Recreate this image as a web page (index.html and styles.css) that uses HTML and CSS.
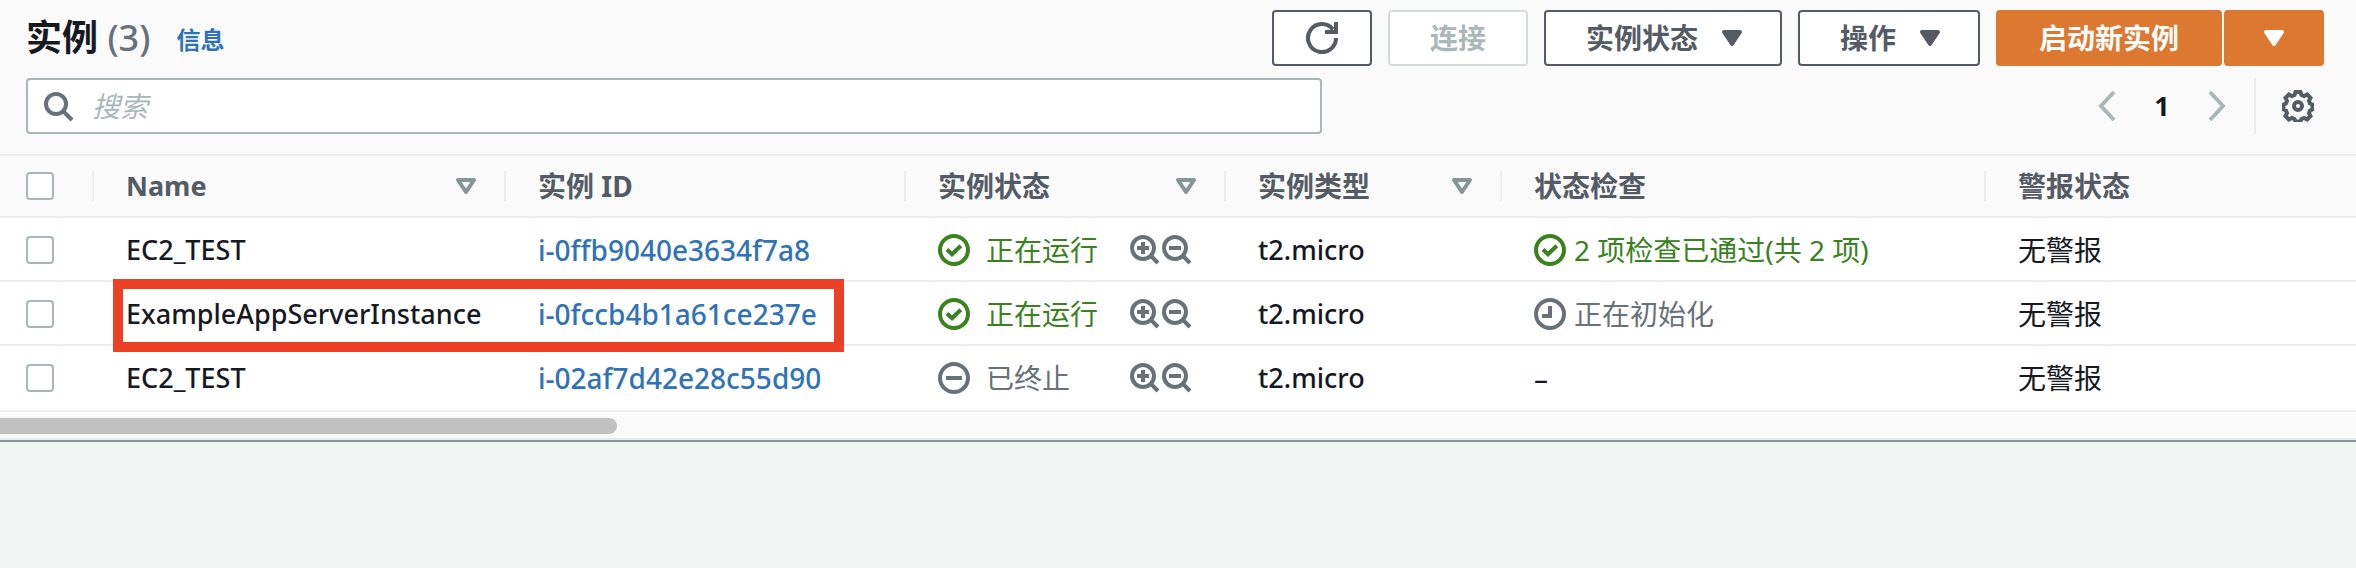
FILE: index.html
```html
<!DOCTYPE html>
<html lang="zh-CN">
<head>
<meta charset="utf-8">
<title>实例</title>
<link rel="stylesheet" href="styles.css">
</head>
<body>
<svg class="defs" aria-hidden="true">
  <symbol id="check" viewBox="0 0 32 32"><circle cx="16" cy="16" r="14"/><path d="M9 15.5l5 4.8 8.8-8.6"/></symbol>
  <symbol id="stopped" viewBox="0 0 32 32"><circle cx="16" cy="16" r="14"/><path d="M8 16h16"/></symbol>
  <symbol id="pending" viewBox="0 0 32 32"><circle cx="16" cy="16" r="14"/><path d="M16 8v10H8"/></symbol>
  <symbol id="zoom-in" viewBox="0 0 32 32"><circle cx="15" cy="14" r="11"/><path d="M22 21l8 8M9 14h12M15 8v12"/></symbol>
  <symbol id="zoom-out" viewBox="0 0 32 32"><circle cx="15" cy="14" r="11"/><path d="M22 21l8 8M9 14h12"/></symbol>
  <symbol id="search" viewBox="0 0 32 32"><circle cx="14" cy="14" r="10"/><path d="M21 21l9 9"/></symbol>
  <symbol id="caret" viewBox="0 0 32 32"><path d="M8 10h16l-8 12z"/></symbol>
  <symbol id="refresh" viewBox="0 0 32 32"><path d="M30 16a14 14 0 1 1-3-8.6M30 0v10H19"/><path class="solid" d="M24 5l5 5h-5z"/></symbol>
  <symbol id="prev" viewBox="0 0 32 32"><path d="M24 2L11 16l13 14"/></symbol>
  <symbol id="next" viewBox="0 0 32 32"><path d="M8 2l13 14L8 30"/></symbol>
  <symbol id="gear" viewBox="0 0 32 32"><circle cx="16" cy="16" r="4"/><path d="M13.500 2h5l1 3 2.600 1 3-1.500 3.400 3.400-1.500 3 1 2.600 2.500 1v5l-2.500 1-1 2.600 1.500 3-3.400 3.400-3-1.500-2.600 1-1 2.500h-5l-1-2.500-2.600-1-3 1.500-3.400-3.400 1.500-3-1-2.600-2.500-1v-5l2.500-1 1-2.600-1.500-3 3.400-3.400 3 1.500 2.600-1z"/></symbol>
</svg>
<main class="panel">
  <header class="toolbar">
    <h1 class="title">实例 <span class="count">(3)</span></h1>
    <a class="info" href="#">信息</a>
    <div class="actions">
      <button class="btn btn-icon" aria-label="刷新"><svg class="icon"><use href="#refresh"/></svg></button>
      <button class="btn" disabled>连接</button>
      <button class="btn btn-menu">实例状态<svg class="icon caret"><use href="#caret"/></svg></button>
      <button class="btn btn-menu">操作<svg class="icon caret"><use href="#caret"/></svg></button>
      <div class="split">
        <button class="btn primary launch">启动新实例</button>
        <button class="btn btn-icon primary" aria-label="更多启动选项"><svg class="icon caret"><use href="#caret"/></svg></button>
      </div>
    </div>
  </header>
  <div class="filters">
    <label class="search"><svg class="icon"><use href="#search"/></svg><input type="text" placeholder="搜索" aria-label="搜索"></label>
    <nav class="pager" aria-label="分页">
      <button class="page-btn" aria-label="上一页"><svg class="icon"><use href="#prev"/></svg></button>
      <span class="page">1</span>
      <button class="page-btn" aria-label="下一页"><svg class="icon"><use href="#next"/></svg></button>
      <button class="settings" aria-label="首选项"><svg class="icon"><use href="#gear"/></svg></button>
    </nav>
  </div>
  <table class="instances">
    <colgroup><col class="c-select"><col class="c-name"><col class="c-id"><col class="c-state"><col class="c-type"><col class="c-check"><col></colgroup>
    <thead>
      <tr>
        <th><input type="checkbox" aria-label="全选"></th>
        <th><div class="head"><span class="latin-head">Name</span><svg class="icon sort"><use href="#caret"/></svg></div></th>
        <th><div class="head">实例 ID</div></th>
        <th><div class="head">实例状态<svg class="icon sort"><use href="#caret"/></svg></div></th>
        <th><div class="head">实例类型<svg class="icon sort"><use href="#caret"/></svg></div></th>
        <th><div class="head">状态检查</div></th>
        <th><div class="head">警报状态</div></th>
      </tr>
    </thead>
    <tbody>
      <tr>
        <td><input type="checkbox" aria-label="选择 i-0ffb9040e3634f7a8"></td>
        <td class="latin">EC2_TEST</td>
        <td class="id"><a href="#">i-0ffb9040e3634f7a8</a></td>
        <td><div class="state"><span class="status ok"><svg class="icon"><use href="#check"/></svg>正在运行</span><span class="zooms"><button aria-label="包含"><svg class="icon"><use href="#zoom-in"/></svg></button><button aria-label="排除"><svg class="icon"><use href="#zoom-out"/></svg></button></span></div></td>
        <td class="latin">t2.micro</td>
        <td><span class="status tight ok"><svg class="icon"><use href="#check"/></svg>2 项检查已通过(共 2 项)</span></td>
        <td>无警报</td>
      </tr>
      <tr>
        <td><input type="checkbox" aria-label="选择 i-0fccb4b1a61ce237e"></td>
        <td class="latin marked">ExampleAppServerInstance<span class="mark"></span></td>
        <td class="id"><a href="#">i-0fccb4b1a61ce237e</a></td>
        <td><div class="state"><span class="status ok"><svg class="icon"><use href="#check"/></svg>正在运行</span><span class="zooms"><button aria-label="包含"><svg class="icon"><use href="#zoom-in"/></svg></button><button aria-label="排除"><svg class="icon"><use href="#zoom-out"/></svg></button></span></div></td>
        <td class="latin">t2.micro</td>
        <td><span class="status tight muted"><svg class="icon"><use href="#pending"/></svg>正在初始化</span></td>
        <td>无警报</td>
      </tr>
      <tr>
        <td><input type="checkbox" aria-label="选择 i-02af7d42e28c55d90"></td>
        <td class="latin">EC2_TEST</td>
        <td class="id"><a href="#">i-02af7d42e28c55d90</a></td>
        <td><div class="state"><span class="status muted"><svg class="icon"><use href="#stopped"/></svg>已终止</span><span class="zooms"><button aria-label="包含"><svg class="icon"><use href="#zoom-in"/></svg></button><button aria-label="排除"><svg class="icon"><use href="#zoom-out"/></svg></button></span></div></td>
        <td class="latin">t2.micro</td>
        <td>–</td>
        <td>无警报</td>
      </tr>
    </tbody>
  </table>
  <div class="scrollbar"><div class="thumb"></div></div>
</main>
</body>
</html>
```
FILE: styles.css
```css
* { box-sizing: border-box; }

body {
  margin: 0;
  background: #f2f3f3;
  color: #16191f;
  font: 28px/36px "Noto Sans", "Noto Sans CJK SC", sans-serif;
}

button, input { font: inherit; margin: 0; }
a { color: #2e73b8; text-decoration: none; }
.defs { position: absolute; width: 0; height: 0; }

.icon {
  width: 32px;
  height: 32px;
  flex: none;
  display: block;
  fill: none;
  stroke: currentColor;
  stroke-width: 4px;
  overflow: visible;
}
.solid { fill: currentColor; stroke: none; }
.caret { fill: currentColor; stroke-linejoin: round; }

.panel {
  background: #fafafa;
  border-bottom: 2px solid #879596;
}

.toolbar {
  display: flex;
  align-items: center;
  padding: 10px 32px 0 26px;
}
.title { margin: 0; font-size: 36px; line-height: 44px; font-weight: 700; }
.count { color: #687078; font-weight: 500; }
.info { margin: 4px 0 0 26px; font-size: 24px; font-weight: 700; }
.actions { display: flex; gap: 16px; margin-left: auto; }
.split { display: flex; gap: 2px; }

.btn {
  display: flex;
  align-items: center;
  height: 56px;
  padding: 0 40px;
  border: 2px solid #545b64;
  border-radius: 4px;
  background: #fff;
  color: #545b64;
  font-weight: 700;
  white-space: nowrap;
}
.btn-icon { padding: 0 32px; }
.btn-menu { gap: 18px; padding-right: 32px; }
.btn:disabled { border-color: #d5dbdb; color: #aab7b8; }
.primary { background: #dd7831; border-color: #dd7831; color: #fff; }
.launch { padding: 0 41px; }

.filters {
  display: flex;
  justify-content: space-between;
  padding: 12px 26px 20px;
}
.search {
  display: flex;
  align-items: center;
  gap: 18px;
  width: 55vw;
  height: 56px;
  padding: 0 14px;
  border: 2px solid #aab7b8;
  border-radius: 4px;
  background: #fff;
  color: #687078;
}
.search input { flex: 1; min-width: 0; border: 0; padding: 0; outline: 0; background: none; }
.search input::placeholder { color: #aab7b8; font-style: italic; opacity: 1; }

.pager { display: flex; align-items: center; color: #16191f; }
.pager button { border: 0; padding: 0; background: none; }
.pager .page-btn { color: #aab7b8; }
.page { width: 80px; text-align: center; font-size: 27px; font-weight: 700; }
.pager .settings {
  height: 56px;
  margin-left: 20px;
  padding: 0 16px 0 26px;
  border-left: 2px solid #eaeded;
  color: #545b64;
}

.instances {
  width: 100%;
  table-layout: fixed;
  border-collapse: separate;
  border-spacing: 0;
  background: #fff;
}
.c-select { width: 94px; }
.c-name { width: 412px; }
.c-id { width: 400px; }
.c-state { width: 320px; }
.c-type { width: 276px; }
.c-check { width: 484px; }

th {
  height: 62px;
  padding: 0;
  border-top: 2px solid #eaeded;
  background: #fafafa;
  color: #545b64;
  text-align: left;
}
.head {
  display: flex;
  align-items: center;
  justify-content: space-between;
  height: 30px;
  padding: 0 24px 0 32px;
}
th:not(:last-child) { background: linear-gradient(#eaeded, #eaeded) right center / 2px 30px no-repeat #fafafa; }
.latin-head { font-size: 27px; }
.sort { color: #879596; stroke-linejoin: round; }

td {
  height: 64px;
  padding: 2px 0 0 32px;
  border-top: 2px solid #eaeded;
  white-space: nowrap;
}
tr:last-child td { height: 68px; padding-bottom: 2px; border-bottom: 2px solid #eaeded; }
th:first-child, td:first-child { padding-left: 26px; }
.latin { font-size: 27px; font-weight: 500; }
.id { font-weight: 500; }

input[type="checkbox"] {
  appearance: none;
  display: block;
  width: 28px;
  height: 28px;
  border: 2px solid #aab7b8;
  border-radius: 4px;
  background: #fff;
}

.state { display: flex; justify-content: space-between; align-items: center; padding-right: 34px; }
.status { display: flex; align-items: center; gap: 16px; }
.tight { gap: 8px; }
.ok { color: #3a821f; }
.muted { color: #687078; }
.zooms { display: flex; }
.zooms button { border: 0; padding: 0; background: none; color: #687078; }

.marked { position: relative; }
.mark {
  position: absolute;
  top: -3px;
  left: 19px;
  width: 731px;
  height: 73px;
  border: 10px solid #eb4026;
  pointer-events: none;
}

.scrollbar { padding: 6px 0 4px; border-bottom: 2px solid #eaeded; }
.thumb { width: 617px; height: 16px; border-radius: 0 8px 8px 0; background: #c1c1c1; }
```
